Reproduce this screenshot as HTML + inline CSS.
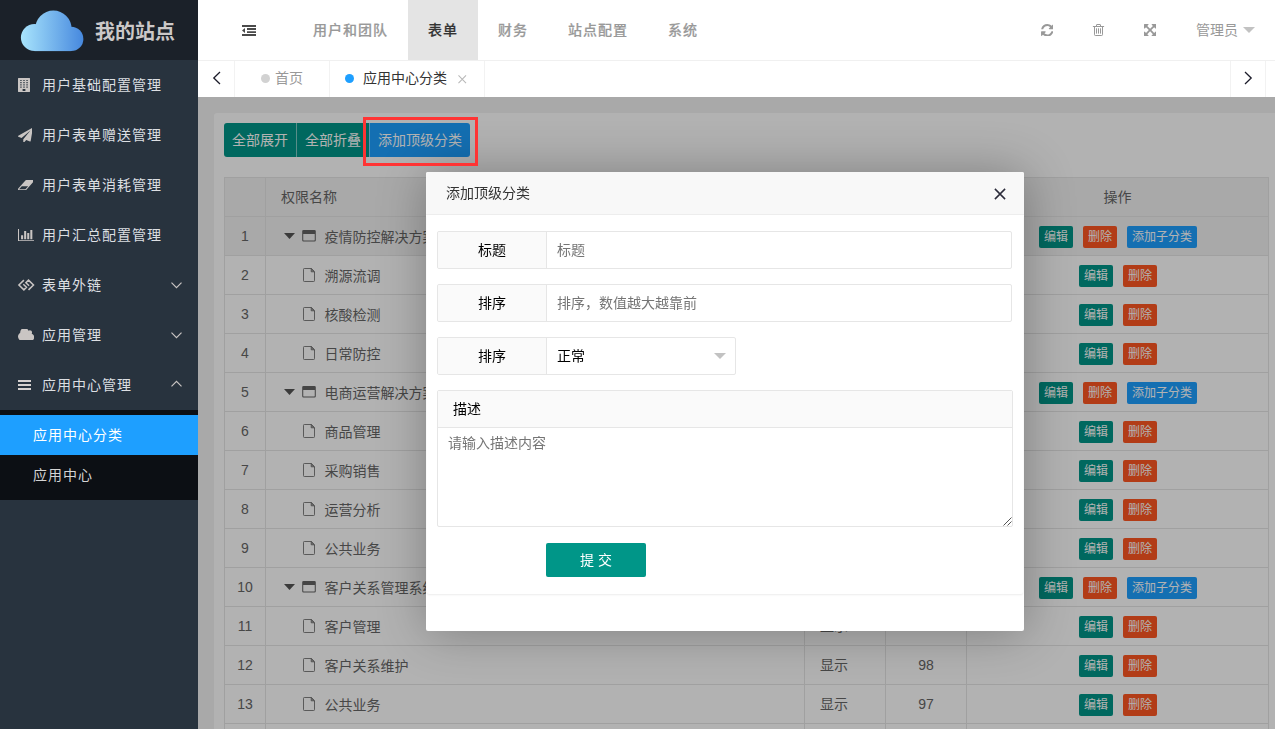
<!DOCTYPE html>
<html lang="zh-CN">
<head>
<meta charset="utf-8">
<title>我的站点</title>
<style>
*{box-sizing:border-box;margin:0;padding:0}
html,body{width:1275px;height:729px;overflow:hidden;background:#fff}
body{font-family:"Liberation Sans","Noto Sans CJK SC",sans-serif;font-size:14px;color:#333;position:relative;-webkit-font-smoothing:antialiased}
.abs{position:absolute}
/* ---------- sidebar ---------- */
.side{position:absolute;left:0;top:0;width:198px;height:729px;background:#28333e;overflow:hidden}
.logo{position:absolute;left:0;top:0;width:198px;height:60px;background:#1b2129}
.logo svg{position:absolute}
.logo .t{position:absolute;left:95px;top:1px;line-height:62px;font-size:20px;font-weight:bold;color:#cbc8c8;letter-spacing:0;white-space:nowrap}
.mi{position:absolute;left:0;width:198px;height:50px;line-height:50px;color:#dcdfe2;letter-spacing:1px;white-space:nowrap}
.mi .tx{position:absolute;left:42px;top:0}
.ic{position:absolute}
.sub{position:absolute;left:0;top:410px;width:198px;height:90px;background:#0c0f14}
.si{position:absolute;left:0;width:198px;height:40px;line-height:40px;padding-left:33px;color:#d4d4d4;letter-spacing:1px;white-space:nowrap}
.si.on{background:#1e9fff;color:#fff}
/* ---------- header ---------- */
.hd{position:absolute;left:198px;top:0;width:1077px;height:61px;background:#fff;border-bottom:1px solid #f0f0f0}
.nv{position:absolute;top:0;height:60px;line-height:61px;padding:0 20px;font-weight:500;-webkit-text-stroke:.2px currentColor;color:#999;letter-spacing:1px;white-space:nowrap}
.nv.on{background:#e4e4e4;color:#333}
.hd svg{position:absolute}
.adm{position:absolute;left:998px;top:0;line-height:60px;color:#999;white-space:nowrap}
/* ---------- tabs ---------- */
.tb{position:absolute;left:198px;top:61px;width:1077px;height:36px;background:#fff}
.tb .v{position:absolute;top:0;width:1px;height:36px;background:#f2f2f2}
.tb .tab{position:absolute;top:0;height:36px;line-height:35px;white-space:nowrap}
.tb svg{position:absolute}
.dot{position:absolute;width:9px;height:9px;border-radius:50%}
/* ---------- body ---------- */
.bd{position:absolute;left:198px;top:97px;width:1077px;height:632px;background:#f2f2f2;overflow:hidden}
.card{position:absolute;left:16px;top:16px;width:1064px;height:700px;background:#fff;border-radius:3px}
.bg{position:absolute;left:10px;top:10px;height:34px;display:flex;border-radius:3px;overflow:hidden}
.bg div{height:34px;line-height:34px;padding:0 8px;color:#fff;background:#009688;white-space:nowrap}
.bg div+div{border-left:1px solid rgba(255,255,255,.5)}
.bg div.bl{background:#1e9fff}
table{position:absolute;left:10px;top:64px;border-collapse:collapse;table-layout:fixed;width:1044px;color:#666}
td,th{border:1px solid #e6e6e6;height:39px;padding:0 15px;font-weight:normal;text-align:left;white-space:nowrap;overflow:hidden;font-size:14px;line-height:20px;position:relative}
thead tr,tr.hv{background:#f2f2f2}
td.c,th.c{text-align:center;padding:0}
td svg{position:absolute}
td .nm{position:absolute;left:58.500px;top:1px;line-height:39px}
.b{display:inline-block;width:34px;height:22px;line-height:22px;padding:0;text-align:center;font-size:12px;color:#fff;border-radius:2px;vertical-align:middle;background:#009688;position:relative;left:.5px;top:.86px}
.b+.b{margin-left:10px}
.b.r{background:#ff5722}
.b.l{background:#1e9fff;width:70px}
.shade{position:absolute;left:0;top:0;width:1077px;height:632px;background:rgba(0,0,0,.3)}
.red{position:absolute;left:165px;top:20px;width:115px;height:49px;border:3px solid #ff3434}
/* ---------- modal ---------- */
.md{position:absolute;left:228px;top:75px;width:598px;height:459px;background:#fff;box-shadow:1px 1px 50px rgba(0,0,0,.3);border-radius:2px;will-change:transform;-webkit-font-smoothing:antialiased}
.md .tt{position:absolute;left:0;top:0;width:598px;height:43px;line-height:42px;padding-left:20px;background:#f8f8f8;border-bottom:1px solid #eee;color:#333;border-radius:2px 2px 0 0}
.md .in{position:absolute;left:1px;top:43px;width:596px;height:379px;background:#fff;border-radius:2px;box-shadow:0 1px 2px 0 rgba(0,0,0,.08)}
.row{position:absolute;left:10px;height:38px;border:1px solid #e6e6e6;border-radius:2px;background:#fff}
.row .lb{position:absolute;left:0;top:0;width:109px;height:36px;line-height:36px;text-align:center;background:#fafafa;border-right:1px solid #e6e6e6;color:#000;border-radius:2px 0 0 2px}
.row .ph{position:absolute;left:119px;top:0;line-height:36px;color:#757575;white-space:nowrap}
.ta{position:absolute;left:10px;top:175px;width:576px;height:137px;border:1px solid #e6e6e6;border-radius:2px}
.ta .h{height:37px;line-height:36px;padding-left:15px;background:#fafafa;border-bottom:1px solid #e6e6e6;color:#000}
.ta .ph{position:absolute;left:10px;top:42px;line-height:20px;color:#757575}
.sb{position:absolute;left:119px;top:328px;width:100px;height:34px;line-height:34px;text-align:center;background:#009688;color:#fff;border-radius:2px}
</style>
</head>
<body>

<!-- ================= SIDEBAR ================= -->
<div class="side">
  <div class="logo">
    <svg width="198" height="60" viewBox="0 0 198 60" style="left:0;top:0">
      <defs><linearGradient id="cg" gradientUnits="userSpaceOnUse" x1="21" y1="0" x2="83.500" y2="0"><stop offset="0" stop-color="#a8e4fc"/><stop offset="1" stop-color="#4688de"/></linearGradient></defs>
      <g fill="url(#cg)"><circle cx="53.400" cy="28.900" r="18.300"/><circle cx="34.500" cy="37.500" r="13.600"/><circle cx="71.200" cy="38.900" r="12.200"/><rect x="34.500" y="38" width="36.700" height="13.100"/></g>
    </svg>
    <div class="t">我的站点</div>
  </div>

  <div class="mi" style="top:60px"><span class="tx">用户基础配置管理</span></div>
  <div class="mi" style="top:110px"><span class="tx">用户表单赠送管理</span></div>
  <div class="mi" style="top:160px"><span class="tx">用户表单消耗管理</span></div>
  <div class="mi" style="top:210px"><span class="tx">用户汇总配置管理</span></div>
  <div class="mi" style="top:260px"><span class="tx">表单外链</span></div>
  <div class="mi" style="top:310px"><span class="tx">应用管理</span></div>
  <div class="mi" style="top:360px"><span class="tx">应用中心管理</span></div>

  <svg class="ic" style="left:17.600px;top:78px" width="12" height="14" viewBox="0 0 12 14"><path fill="#c9c5c3" fill-rule="evenodd" d="M0.400 0H11.600Q12 0 12 0.400V13.600Q12 14 11.600 14H0.400Q0 14 0 13.600V0.400Q0 0 0.400 0Z M2.300 1.900h1.300v1.200h-1.300z M5.350 1.900h1.300v1.200h-1.300z M8.400 1.900h1.300v1.200h-1.300z M2.300 4.100h1.300v1.200h-1.300z M5.350 4.100h1.300v1.200h-1.300z M8.400 4.100h1.300v1.200h-1.300z M2.300 6.300h1.300v1.200h-1.300z M5.350 6.300h1.300v1.200h-1.300z M8.400 6.300h1.300v1.200h-1.300z M2.300 8.500h1.300v1.200h-1.300z M5.350 8.500h1.300v1.200h-1.300z M8.400 8.500h1.300v1.200h-1.300z M4.600 10.900h2.800v2h-2.800z"/></svg>
  <svg class="ic" style="left:17.700px;top:127.700px" width="14.800" height="14.500" viewBox="0 0 1792 1792" preserveAspectRatio="none"><path fill="#c9c5c3" d="M1764 11q33 24 27 64l-256 1536q-5 29-32 45-14 8-31 8-11 0-24-5l-453-185-242 295q-18 23-49 23-13 0-22-4-19-7-30.500-23.500t-11.500-36.500v-349l864-1059-1069 925-395-162q-37-14-40-55-2-40 32-59l1664-960q15-9 32-9 20 0 36 11z"/></svg>
  <svg class="ic" style="left:17.700px;top:179.800px" width="15.800" height="10.300" viewBox="0 256 1920 1280" preserveAspectRatio="none"><path fill="#c9c5c3" d="M896 1408l336-384h-768l-336 384h768zm1013-1077q15 34 9.500 71.500t-30.500 65.500l-896 1024q-38 44-96 44h-768q-38 0-69.500-20.500t-47.500-54.500q-15-34-9.500-71.500t30.500-65.500l896-1024q38-44 96-44h768q38 0 69.500 20.500t47.500 54.500z"/></svg>
  <svg class="ic" style="left:17.700px;top:228.800px" width="16.400" height="12.300" viewBox="0 128 2048 1536" preserveAspectRatio="none"><path fill="#c9c5c3" d="M640 896v512h-256v-512h256zm384-512v1024h-256v-1024h256zm1024 1152v128h-2048v-1536h128v1408h1920zm-640-896v768h-256v-768h256zm384-384v1152h-256v-1152h256z"/></svg>
  <svg class="ic" style="left:12px;top:270px" width="30" height="30" viewBox="12 270 30 30"><path fill="none" stroke="#c9c5c3" stroke-width="1.500" d="M23.900 280.100 L18.900 285 L23.900 289.900 L26.500 287.300 L23.300 284.300 M28.500 289.900 L33.500 285 L28.500 280.100 L25.900 282.700 L29.100 285.700"/></svg>
  <svg class="ic" style="left:17.600px;top:328.500px" width="16.200" height="11.700" viewBox="0 256 1920 1280" preserveAspectRatio="none"><path fill="#c9c5c3" d="M1920 1152q0 159-112.500 271.500t-271.500 112.500h-1088q-185 0-316.500-131.500t-131.500-316.500q0-132 71-241.500t187-163.500q-2-28-2-43 0-212 150-362t362-150q158 0 286.500 88t187.500 230q70-62 166-62 106 0 181 75t75 181q0 75-41 138 129 30 213 134.500t84 239.500z"/></svg>
  <svg class="ic" style="left:17.500px;top:380px" width="13.400" height="10" viewBox="0 0 13.400 10"><path fill="#d6d2d0" d="M0 0h13.400v2H0z M0 4h13.400v2H0z M0 8h13.400v2H0z"/></svg>
  <svg class="ic" style="left:171px;top:282px" width="11" height="7" viewBox="0 0 11 7"><path fill="none" stroke="#c9c5c3" stroke-width="1.200" d="M0.500 0.700 L5.500 5.700 L10.500 0.700"/></svg>
  <svg class="ic" style="left:171px;top:332px" width="11" height="7" viewBox="0 0 11 7"><path fill="none" stroke="#c9c5c3" stroke-width="1.200" d="M0.500 0.700 L5.500 5.700 L10.500 0.700"/></svg>
  <svg class="ic" style="left:171px;top:379.500px" width="11" height="7" viewBox="0 0 11 7"><path fill="none" stroke="#c9c5c3" stroke-width="1.200" d="M0.500 6.300 L5.500 1.300 L10.500 6.300"/></svg>
  <div class="sub">
    <div class="si on" style="top:5px">应用中心分类</div>
    <div class="si" style="top:45px">应用中心</div>
  </div>
</div>

<!-- ================= HEADER ================= -->
<div class="hd">
  <div class="nv" style="left:95px">用户和团队</div>
  <div class="nv on" style="left:210px">表单</div>
  <div class="nv" style="left:280px">财务</div>
  <div class="nv" style="left:350px">站点配置</div>
  <div class="nv" style="left:450px">系统</div>

  <svg style="left:44px;top:25px" width="14" height="11" viewBox="0 0 14 11"><path fill="#4a4a4a" d="M0 0h14v2H0z M5 3.100h9v1.800H5z M5 6.200h9v1.800H5z M0 9.100h14v1.900H0z M0 5.500 L3 3.100 V7.900 Z"/></svg>
  <svg style="left:842.700px;top:23.700px" width="12.600" height="12.500" viewBox="128 128 1536 1536"><path fill="#999" d="M1639 1056q0 5-1 7-64 268-268 434.500t-478 166.500q-146 0-282.500-55t-243.500-157l-129 129q-19 19-45 19t-45-19-19-45v-448q0-26 19-45t45-19h448q26 0 45 19t19 45-19 45l-137 137q71 66 161 102t187 36q134 0 250-65t186-179q11-17 53-117 8-23 30-23h192q13 0 22.500 9.500t9.500 22.500zm25-800v448q0 26-19 45t-45 19h-448q-26 0-45-19t-19-45 19-45l138-138q-148-137-349-137-134 0-250 65t-186 179q-11 17-53 117-8 23-30 23h-199q-13 0-22.500-9.500t-9.500-22.500v-7q65-268 270-434.500t480-166.500q146 0 284 55.500t245 156.500l130-129q19-19 45-19t45 19 19 45z"/></svg>
  <svg style="left:894px;top:23px" width="13" height="14" viewBox="0 0 13 14"><path fill="none" stroke="#999" stroke-width="1" d="M0.900 3.500 H12.100 M4.500 3.500 V1.900 Q4.500 1.500 4.900 1.500 H8.100 Q8.500 1.500 8.500 1.900 V3.500 M2.500 3.500 V11.700 Q2.500 12.500 3.300 12.500 H9.700 Q10.500 12.500 10.500 11.700 V3.500 M4.500 5.300 V10.600 M6.500 5.300 V10.600 M8.500 5.300 V10.600"/></svg>
  <svg style="left:945.900px;top:24px" width="12.200" height="12.200" viewBox="128 128 1536 1536"><path fill="#999" d="M1411 541l-355 355 355 355 144-144q29-31 70-14 39 17 39 59v448q0 26-19 45t-45 19h-448q-42 0-59-40-17-39 14-69l144-144-355-355-355 355 144 144q31 30 14 69-17 40-59 40h-448q-26 0-45-19t-19-45v-448q0-42 40-59 39-17 69 14l144 144 355-355-355-355-144 144q-19 19-45 19-12 0-24-5-40-17-40-59v-448q0-26 19-45t45-19h448q42 0 59 40 17 39-14 69l-144 144 355 355 355-355-144-144q-31-30-14-69 17-40 59-40h448q26 0 45 19t19 45v448q0 42-39 59-13 5-25 5-26 0-45-19z"/></svg>
  <svg style="left:1045px;top:27px" width="12" height="6" viewBox="0 0 12 6"><path fill="#c2c2c2" d="M0 0H12L6 6Z"/></svg>
  <div class="adm">管理员</div>
</div>

<!-- ================= TABS ================= -->
<div class="tb">
  <div class="v" style="left:36px"></div>
  <div class="v" style="left:131px"></div>
  <div class="v" style="left:286px"></div>
  <div class="v" style="left:1032px"></div>
  <div class="v" style="left:1067px"></div>

  <svg style="left:14px;top:10px" width="9" height="14" viewBox="0 0 9 14"><path fill="none" stroke="#1c1c2a" stroke-width="1.300" d="M8 1 L1.800 7 L8 13"/></svg>
  <svg style="left:1046px;top:10px" width="9" height="14" viewBox="0 0 9 14"><path fill="none" stroke="#1c1c2a" stroke-width="1.300" d="M1 1 L7.200 7 L1 13"/></svg>
  <svg style="left:260px;top:14px" width="8.500" height="8.500" viewBox="0 0 9 9"><path fill="none" stroke="#b8b8b8" stroke-width="1.100" d="M0.500 0.500 L8.500 8.500 M8.500 0.500 L0.500 8.500"/></svg>
  <div class="dot" style="left:63px;top:13px;background:#d2d2d2"></div>
  <div class="tab" style="left:77px;color:#999">首页</div>
  <div class="dot" style="left:147px;top:13px;background:#1e9fff"></div>
  <div class="tab" style="left:165px;color:#333">应用中心分类</div>
</div>

<!-- ================= BODY ================= -->
<div class="bd">
  <div class="card">
    <div class="bg"><div>全部展开</div><div>全部折叠</div><div class="bl">添加顶级分类</div></div>
    <table>
      <colgroup><col style="width:41px"><col style="width:539px"><col style="width:81px"><col style="width:81px"><col style="width:302px"></colgroup>
      <thead><tr><th></th><th>权限名称</th><th>状态</th><th class="c">排序</th><th class="c">操作</th></tr></thead>
      <tbody>
        <tr class="hv"><td class="c">1</td><td><svg style="left:18px;top:16px" width="11" height="6" viewBox="0 0 11 6"><path fill="#555" d="M0 0H11L5.500 6Z"/></svg><svg style="left:36px;top:13.100px" width="14" height="11.500" viewBox="0 0 14 11.500"><path fill="#646464" fill-rule="evenodd" d="M1.500 0 H12.500 Q13.800 0 13.800 1.300 V10.200 Q13.800 11.500 12.500 11.500 H1.500 Q0.200 11.500 0.200 10.200 V1.300 Q0.200 0 1.500 0 Z M1.250 3.900 V10.100 Q1.250 10.450 1.600 10.450 H12.400 Q12.750 10.450 12.750 10.100 V3.900 Z"/></svg><span class="nm">疫情防控解决方案</span></td><td>显示</td><td class="c">100</td><td class="c"><span class="b">编辑</span><span class="b r">删除</span><span class="b l">添加子分类</span></td></tr>
        <tr><td class="c">2</td><td><svg style="left:36.500px;top:11.500px" width="12" height="14" viewBox="0 0 12 14"><path fill="none" stroke="#6b6b6b" stroke-width=".85" d="M8.200 0.500 H1.300 Q0.500 0.500 0.500 1.300 V12.700 Q0.500 13.500 1.300 13.500 H10.700 Q11.500 13.500 11.500 12.700 V3.800 Z"/><path fill="#6b6b6b" fill-opacity=".55" stroke="#6b6b6b" stroke-width=".85" d="M8.200 0.500 V3.800 H11.500 Z"/></svg><span class="nm">溯源流调</span></td><td>显示</td><td class="c">100</td><td class="c"><span class="b">编辑</span><span class="b r">删除</span></td></tr>
        <tr><td class="c">3</td><td><svg style="left:36.500px;top:11.500px" width="12" height="14" viewBox="0 0 12 14"><path fill="none" stroke="#6b6b6b" stroke-width=".85" d="M8.200 0.500 H1.300 Q0.500 0.500 0.500 1.300 V12.700 Q0.500 13.500 1.300 13.500 H10.700 Q11.500 13.500 11.500 12.700 V3.800 Z"/><path fill="#6b6b6b" fill-opacity=".55" stroke="#6b6b6b" stroke-width=".85" d="M8.200 0.500 V3.800 H11.500 Z"/></svg><span class="nm">核酸检测</span></td><td>显示</td><td class="c">99</td><td class="c"><span class="b">编辑</span><span class="b r">删除</span></td></tr>
        <tr><td class="c">4</td><td><svg style="left:36.500px;top:11.500px" width="12" height="14" viewBox="0 0 12 14"><path fill="none" stroke="#6b6b6b" stroke-width=".85" d="M8.200 0.500 H1.300 Q0.500 0.500 0.500 1.300 V12.700 Q0.500 13.500 1.300 13.500 H10.700 Q11.500 13.500 11.500 12.700 V3.800 Z"/><path fill="#6b6b6b" fill-opacity=".55" stroke="#6b6b6b" stroke-width=".85" d="M8.200 0.500 V3.800 H11.500 Z"/></svg><span class="nm">日常防控</span></td><td>显示</td><td class="c">98</td><td class="c"><span class="b">编辑</span><span class="b r">删除</span></td></tr>
        <tr><td class="c">5</td><td><svg style="left:18px;top:16px" width="11" height="6" viewBox="0 0 11 6"><path fill="#555" d="M0 0H11L5.500 6Z"/></svg><svg style="left:36px;top:13.100px" width="14" height="11.500" viewBox="0 0 14 11.500"><path fill="#646464" fill-rule="evenodd" d="M1.500 0 H12.500 Q13.800 0 13.800 1.300 V10.200 Q13.800 11.500 12.500 11.500 H1.500 Q0.200 11.500 0.200 10.200 V1.300 Q0.200 0 1.500 0 Z M1.250 3.900 V10.100 Q1.250 10.450 1.600 10.450 H12.400 Q12.750 10.450 12.750 10.100 V3.900 Z"/></svg><span class="nm">电商运营解决方案</span></td><td>显示</td><td class="c">99</td><td class="c"><span class="b">编辑</span><span class="b r">删除</span><span class="b l">添加子分类</span></td></tr>
        <tr><td class="c">6</td><td><svg style="left:36.500px;top:11.500px" width="12" height="14" viewBox="0 0 12 14"><path fill="none" stroke="#6b6b6b" stroke-width=".85" d="M8.200 0.500 H1.300 Q0.500 0.500 0.500 1.300 V12.700 Q0.500 13.500 1.300 13.500 H10.700 Q11.500 13.500 11.500 12.700 V3.800 Z"/><path fill="#6b6b6b" fill-opacity=".55" stroke="#6b6b6b" stroke-width=".85" d="M8.200 0.500 V3.800 H11.500 Z"/></svg><span class="nm">商品管理</span></td><td>显示</td><td class="c">100</td><td class="c"><span class="b">编辑</span><span class="b r">删除</span></td></tr>
        <tr><td class="c">7</td><td><svg style="left:36.500px;top:11.500px" width="12" height="14" viewBox="0 0 12 14"><path fill="none" stroke="#6b6b6b" stroke-width=".85" d="M8.200 0.500 H1.300 Q0.500 0.500 0.500 1.300 V12.700 Q0.500 13.500 1.300 13.500 H10.700 Q11.500 13.500 11.500 12.700 V3.800 Z"/><path fill="#6b6b6b" fill-opacity=".55" stroke="#6b6b6b" stroke-width=".85" d="M8.200 0.500 V3.800 H11.500 Z"/></svg><span class="nm">采购销售</span></td><td>显示</td><td class="c">99</td><td class="c"><span class="b">编辑</span><span class="b r">删除</span></td></tr>
        <tr><td class="c">8</td><td><svg style="left:36.500px;top:11.500px" width="12" height="14" viewBox="0 0 12 14"><path fill="none" stroke="#6b6b6b" stroke-width=".85" d="M8.200 0.500 H1.300 Q0.500 0.500 0.500 1.300 V12.700 Q0.500 13.500 1.300 13.500 H10.700 Q11.500 13.500 11.500 12.700 V3.800 Z"/><path fill="#6b6b6b" fill-opacity=".55" stroke="#6b6b6b" stroke-width=".85" d="M8.200 0.500 V3.800 H11.500 Z"/></svg><span class="nm">运营分析</span></td><td>显示</td><td class="c">98</td><td class="c"><span class="b">编辑</span><span class="b r">删除</span></td></tr>
        <tr><td class="c">9</td><td><svg style="left:36.500px;top:11.500px" width="12" height="14" viewBox="0 0 12 14"><path fill="none" stroke="#6b6b6b" stroke-width=".85" d="M8.200 0.500 H1.300 Q0.500 0.500 0.500 1.300 V12.700 Q0.500 13.500 1.300 13.500 H10.700 Q11.500 13.500 11.500 12.700 V3.800 Z"/><path fill="#6b6b6b" fill-opacity=".55" stroke="#6b6b6b" stroke-width=".85" d="M8.200 0.500 V3.800 H11.500 Z"/></svg><span class="nm">公共业务</span></td><td>显示</td><td class="c">97</td><td class="c"><span class="b">编辑</span><span class="b r">删除</span></td></tr>
        <tr><td class="c">10</td><td><svg style="left:18px;top:16px" width="11" height="6" viewBox="0 0 11 6"><path fill="#555" d="M0 0H11L5.500 6Z"/></svg><svg style="left:36px;top:13.100px" width="14" height="11.500" viewBox="0 0 14 11.500"><path fill="#646464" fill-rule="evenodd" d="M1.500 0 H12.500 Q13.800 0 13.800 1.300 V10.200 Q13.800 11.500 12.500 11.500 H1.500 Q0.200 11.500 0.200 10.200 V1.300 Q0.200 0 1.500 0 Z M1.250 3.900 V10.100 Q1.250 10.450 1.600 10.450 H12.400 Q12.750 10.450 12.750 10.100 V3.900 Z"/></svg><span class="nm">客户关系管理系统</span></td><td>显示</td><td class="c">98</td><td class="c"><span class="b">编辑</span><span class="b r">删除</span><span class="b l">添加子分类</span></td></tr>
        <tr><td class="c">11</td><td><svg style="left:36.500px;top:11.500px" width="12" height="14" viewBox="0 0 12 14"><path fill="none" stroke="#6b6b6b" stroke-width=".85" d="M8.200 0.500 H1.300 Q0.500 0.500 0.500 1.300 V12.700 Q0.500 13.500 1.300 13.500 H10.700 Q11.500 13.500 11.500 12.700 V3.800 Z"/><path fill="#6b6b6b" fill-opacity=".55" stroke="#6b6b6b" stroke-width=".85" d="M8.200 0.500 V3.800 H11.500 Z"/></svg><span class="nm">客户管理</span></td><td>显示</td><td class="c">100</td><td class="c"><span class="b">编辑</span><span class="b r">删除</span></td></tr>
        <tr><td class="c">12</td><td><svg style="left:36.500px;top:11.500px" width="12" height="14" viewBox="0 0 12 14"><path fill="none" stroke="#6b6b6b" stroke-width=".85" d="M8.200 0.500 H1.300 Q0.500 0.500 0.500 1.300 V12.700 Q0.500 13.500 1.300 13.500 H10.700 Q11.500 13.500 11.500 12.700 V3.800 Z"/><path fill="#6b6b6b" fill-opacity=".55" stroke="#6b6b6b" stroke-width=".85" d="M8.200 0.500 V3.800 H11.500 Z"/></svg><span class="nm">客户关系维护</span></td><td>显示</td><td class="c">98</td><td class="c"><span class="b">编辑</span><span class="b r">删除</span></td></tr>
        <tr><td class="c">13</td><td><svg style="left:36.500px;top:11.500px" width="12" height="14" viewBox="0 0 12 14"><path fill="none" stroke="#6b6b6b" stroke-width=".85" d="M8.200 0.500 H1.300 Q0.500 0.500 0.500 1.300 V12.700 Q0.500 13.500 1.300 13.500 H10.700 Q11.500 13.500 11.500 12.700 V3.800 Z"/><path fill="#6b6b6b" fill-opacity=".55" stroke="#6b6b6b" stroke-width=".85" d="M8.200 0.500 V3.800 H11.500 Z"/></svg><span class="nm">公共业务</span></td><td>显示</td><td class="c">97</td><td class="c"><span class="b">编辑</span><span class="b r">删除</span></td></tr>
        <tr><td class="c"></td><td></td><td></td><td class="c"></td><td class="c"></td></tr>
      </tbody>
    </table>
  </div>
  <div class="shade"></div>

  <!-- modal -->
  <div class="md">
    <div class="tt">添加顶级分类<svg style="position:absolute;left:568px;top:16px" width="12" height="12" viewBox="0 0 12 12"><path fill="none" stroke="#2b2b3a" stroke-width="1.500" d="M0.900 0.900 L11.100 11.100 M11.100 0.900 L0.900 11.100"/></svg></div>
    <div class="in">
      <div class="row" style="top:16px;width:575px"><div class="lb">标题</div><div class="ph">标题</div></div>
      <div class="row" style="top:69px;width:575px"><div class="lb">排序</div><div class="ph">排序，数值越大越靠前</div></div>
      <div class="row" style="top:122px;width:299px"><div class="lb">排序</div><div class="ph" style="color:#000">正常</div><svg style="position:absolute;left:276.200px;top:15px" width="12" height="6" viewBox="0 0 12 6"><path fill="#c2c2c2" d="M0 0H12L6 6Z"/></svg></div>
      <div class="ta"><div class="h">描述</div><div class="ph">请输入描述内容</div><svg style="position:absolute;left:565px;top:126px" width="9" height="9" viewBox="0 0 9 9"><path fill="none" stroke="#555" stroke-width="1" d="M0.500 8.500 L8.500 0.500 M4.500 8.500 L8.500 4.500"/></svg></div>
      <div class="sb">提 交</div>
    </div>
  </div>
  <div class="red"></div>
</div>

</body>
</html>
